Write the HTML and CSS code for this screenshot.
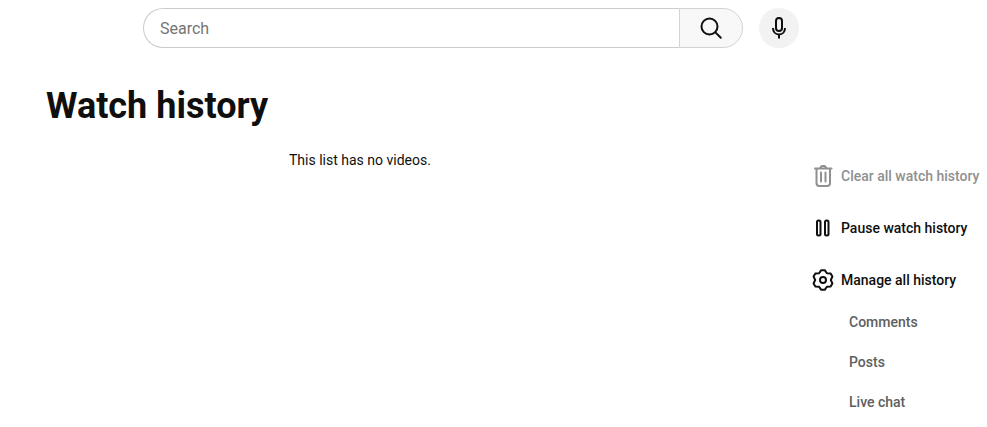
FILE: index.html
```html
<!DOCTYPE html>
<html lang="en">

<head>
    <meta charset="UTF-8">
    <meta name="viewport" content="width=device-width, initial-scale=1.0">
    <title>Watch history</title>
    <link rel="stylesheet" href="styles.css">
</head>

<body>
    <header class="masthead">
        <div class="search-box">
            <div class="search-input">Search</div>
            <button class="search-btn" aria-label="Search">
                <svg width="24" height="24" viewBox="0 0 24 24" fill="none" stroke="#0f0f0f" stroke-width="2">
                    <circle cx="10.5" cy="10.5" r="8"></circle>
                    <path d="M16.4 16.4 21.8 21.8" stroke-linecap="round"></path>
                </svg>
            </button>
        </div>
        <button class="mic-btn" aria-label="Search with your voice">
            <svg width="24" height="24" viewBox="0 0 24 24" fill="none" stroke="#0f0f0f" stroke-width="2">
                <rect x="9" y="2" width="6" height="13" rx="3"></rect>
                <path d="M6 12c0 3.800 2.500 6.500 6 6.500s6-2.700 6-6.500M12 18.500V22.500"></path>
            </svg>
        </button>
    </header>

    <h1 class="page-title">Watch history</h1>

    <div class="content">
        <p class="empty-msg">This list has no videos.</p>

        <aside class="side-menu">
            <div class="menu-item disabled">
                <svg width="24" height="24" viewBox="0 0 24 24" fill="none" stroke="currentColor" stroke-width="2" stroke-linecap="round">
                    <path d="M4 4.500h16.500M9.500 4.500c0-1.800.8-2.500 2-2.500h1.500c1.200 0 2 .7 2 2.500M5.500 4.500V19a3 3 0 0 0 3 3h7.500a3 3 0 0 0 3-3V4.500M10 8.500v9M14.500 8.500v9"></path>
                </svg>
                <span>Clear all watch history</span>
            </div>
            <div class="menu-item">
                <svg width="24" height="24" viewBox="0 0 24 24" fill="none" stroke="currentColor" stroke-width="2">
                    <rect x="6" y="4.500" width="3.500" height="15" rx="1.500"></rect>
                    <rect x="14" y="4.500" width="3.500" height="15" rx="1.500"></rect>
                </svg>
                <span>Pause watch history</span>
            </div>
            <div class="menu-item">
                <svg width="24" height="24" viewBox="0 0 24 24" fill="none" stroke="currentColor" stroke-width="2" stroke-linejoin="round">
                    <polygon points="10.260,2.150 13.740,2.150 15.900,5.250 19.660,5.570 21.400,8.580 19.800,12 21.400,15.420 19.660,18.430 15.900,18.750 13.740,21.850 10.260,21.850 8.100,18.750 4.340,18.430 2.600,15.420 4.200,12 2.600,8.580 4.340,5.570 8.100,5.250"></polygon>
                    <circle cx="12" cy="12" r="3"></circle>
                </svg>
                <span>Manage all history</span>
            </div>
            <div class="sub-item">Comments</div>
            <div class="sub-item">Posts</div>
            <div class="sub-item">Live chat</div>
        </aside>
    </div>
</body>

</html>
```

FILE: styles.css
```css
body {
    margin: 0;
    background-color: #fff;
    color: #0f0f0f;
    font-family: Roboto, Arial, sans-serif;
    overflow: hidden;
}

button {
    padding: 0;
    cursor: pointer;
}

.masthead {
    display: flex;
    align-items: center;
    gap: 16px;
    height: 40px;
    padding: 8px 0 0 143px;
}

.search-box {
    display: flex;
    width: 600px;
    height: 40px;
    box-sizing: border-box;
}

.search-input {
    flex: 1;
    padding-left: 16px;
    line-height: 40px;
    height: 38px;
    font-size: 16px;
    color: #757575;
    border: 1px solid #ccc;
    border-right: none;
    border-radius: 20px 0 0 20px;
}

.search-btn {
    display: flex;
    align-items: center;
    justify-content: center;
    width: 64px;
    background-color: #f8f8f8;
    border: 1px solid #d3d3d3;
    border-radius: 0 20px 20px 0;
}

.mic-btn {
    display: flex;
    align-items: center;
    justify-content: center;
    width: 40px;
    height: 40px;
    background-color: #f2f2f2;
    border: none;
    border-radius: 50%;
}

.page-title {
    margin: 36px 0 0 46px;
    font-size: 36px;
    line-height: 44px;
    font-weight: 700;
}

.content {
    display: flex;
    justify-content: space-between;
    margin-top: 16px;
}

.empty-msg {
    margin: 6px 0 0 289px;
    font-size: 14px;
    line-height: 20px;
}

.side-menu {
    width: 176px;
    padding-top: 6px;
}

.menu-item {
    display: flex;
    align-items: center;
    gap: 6px;
    height: 52px;
    font-size: 14px;
    font-weight: 500;
}

.menu-item.disabled {
    color: #909090;
}

.sub-item {
    height: 40px;
    line-height: 40px;
    padding-left: 38px;
    font-size: 14px;
    font-weight: 500;
    color: #606060;
}

.menu-item + .sub-item {
    margin-top: -4px;
}
```
